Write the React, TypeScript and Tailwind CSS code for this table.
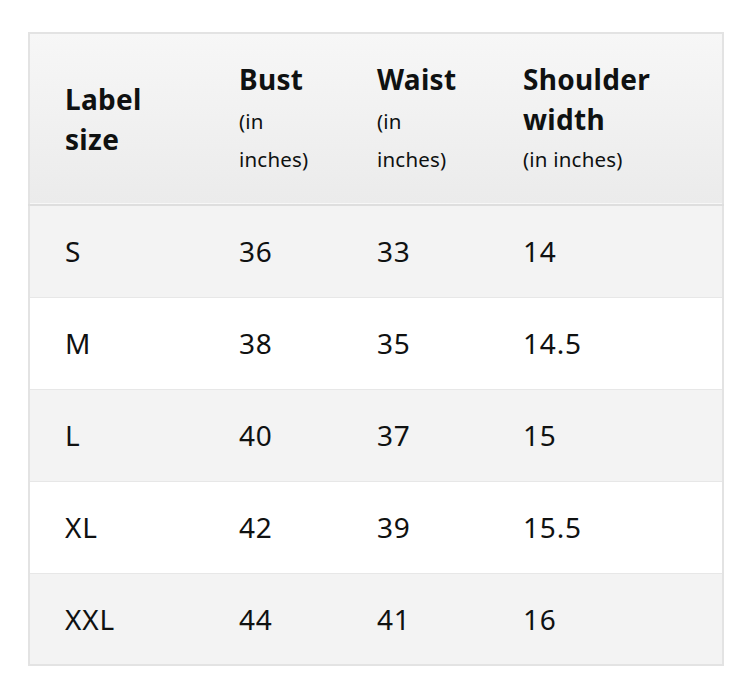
import React from "react";

const rows = [
  ["S", "36", "33", "14"],
  ["M", "38", "35", "14.5"],
  ["L", "40", "37", "15"],
  ["XL", "42", "39", "15.5"],
  ["XXL", "44", "41", "16"],
];

export default function App() {
  return (
    <div
      className="w-[750px] h-[690px] bg-white pt-[32px] pl-[28px]"
      style={{ fontFamily: '"Noto Sans", "Open Sans", sans-serif' }}
    >
      <table className="w-[694px] border-collapse border-2 border-[#e3e3e3] text-[#0f1111] table-fixed">
        <colgroup>
          <col className="w-[175px]" />
          <col className="w-[138px]" />
          <col className="w-[146px]" />
          <col className="w-[235px]" />
        </colgroup>
        <thead>
          <tr className="h-[172px] bg-gradient-to-b from-[#f7f7f7] to-[#ebebeb] border-b-2 border-[#dedede]">
            <th className="text-left align-middle pl-[35px] font-bold text-[28px] leading-[40px] tracking-[0.3px]">
              Label
              <br />
              size
            </th>
            <th className="text-left align-middle pl-[35px] font-bold text-[28px] leading-[40px] tracking-[0.3px]">
              Bust
              <span className="block font-normal text-[20.5px] leading-[40px] tracking-[0.2px] pt-[2px] -mb-[2px]">(in</span>
              <span className="block font-normal text-[20.5px] leading-[40px] tracking-[0.2px]">inches)</span>
            </th>
            <th className="text-left align-middle pl-[35px] font-bold text-[28px] leading-[40px] tracking-[0.3px]">
              Waist
              <span className="block font-normal text-[20.5px] leading-[40px] tracking-[0.2px] pt-[2px] -mb-[2px]">(in</span>
              <span className="block font-normal text-[20.5px] leading-[40px] tracking-[0.2px]">inches)</span>
            </th>
            <th className="text-left align-middle pl-[35px] font-bold text-[28px] leading-[40px] tracking-[0.3px]">
              Shoulder
              <br />
              width
              <span className="block font-normal text-[20.5px] leading-[40px] tracking-[0.2px]">(in inches)</span>
            </th>
          </tr>
        </thead>
        <tbody>
          {rows.map((r, i) => (
            <tr
              key={r[0]}
              className={
                (i % 2 === 0 ? "bg-[#f3f3f3]" : "bg-white") +
                " h-[92px] border-t border-[#e7e7e7]"
              }
            >
              {r.map((c, j) => (
                <td key={j} className="pl-[35px] align-middle text-[28px] leading-[40px] tracking-[0.8px]">
                  {c}
                </td>
              ))}
            </tr>
          ))}
        </tbody>
      </table>
    </div>
  );
}
